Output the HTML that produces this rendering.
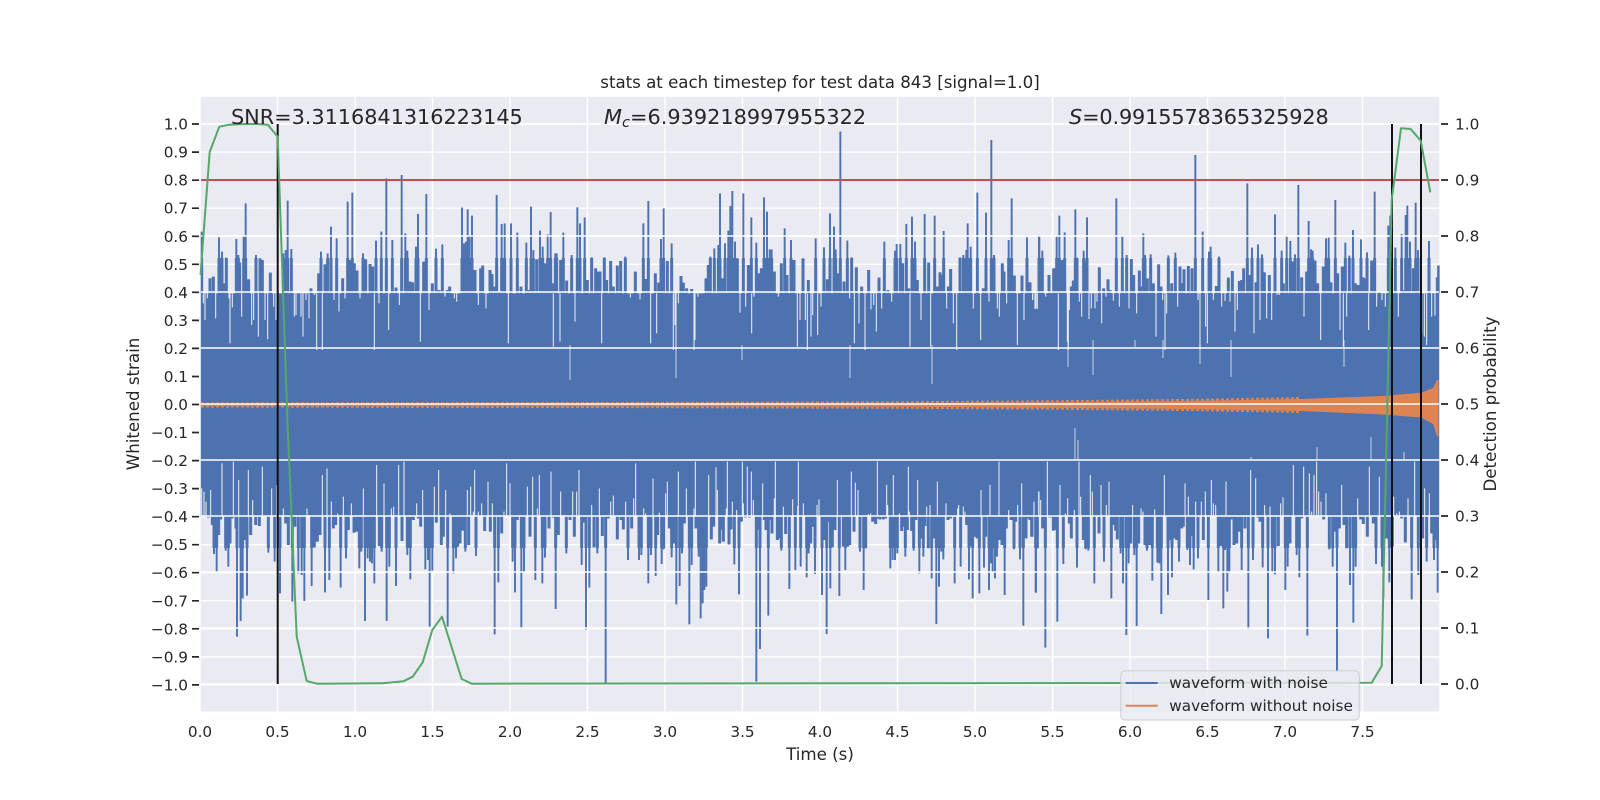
<!DOCTYPE html>
<html><head><meta charset="utf-8"><title>stats at each timestep</title>
<style>
html,body{margin:0;padding:0;background:#fff;width:1600px;height:800px;overflow:hidden}
svg{display:block}
text{font-family:"DejaVu Sans","Liberation Sans",sans-serif;fill:#262626}
.t{font-size:15.28px}
.b{font-size:20.83px}
.l{font-size:16.67px}
.s{fill:none;stroke:#4c72b0}
.n{fill:none;stroke:#eaeaf2;stroke-width:3.2}
</style></head><body>
<svg width="1600" height="800" viewBox="0 0 1600 800" xmlns="http://www.w3.org/2000/svg">
<defs>
<clipPath id="ct"><rect x="201" y="258" width="1238" height="36"/></clipPath>
<clipPath id="cb"><rect x="201" y="516" width="1238" height="32"/></clipPath>
</defs>
<rect x="200.8" y="96.8" width="1238.4" height="614.6" fill="#eaeaf2"/>
<path fill="none" stroke="#fff" stroke-width="1.4" d="M201 124H1439M201 152.1H1439M201 180.2H1439M201 208.2H1439M201 236.3H1439M201 264.3H1439M201 292.3H1439M201 320.4H1439M201 348.4H1439M201 376.5H1439M201 404.5H1439M201 432.5H1439M201 460.6H1439M201 488.6H1439M201 516.7H1439M201 544.7H1439M201 572.7H1439M201 600.8H1439M201 628.8H1439M201 656.9H1439M201 684.9H1439M277.5 97V711M355 97V711M432.5 97V711M510 97V711M587.5 97V711M665 97V711M742.5 97V711M820 97V711M897.5 97V711M975 97V711M1052.5 97V711M1130 97V711M1207.5 97V711M1285 97V711M1362.5 97V711"/>
<rect x="200.8" y="293.3" width="1238.4" height="223.4" fill="#4c72b0"/>
<g transform="translate(200 120) scale(.33333)" stroke-width="5.8">
<path id="a" class="s" d="M5 335V520M30 475V520M40 470V520M57 352V520M66 395V520M72 490V520M79 413V520M109 357V520M115 405V520M119 428V520M131 347V520M137 250V520M146 478V520M168 405V520M180 415V520M187 420V520M211 458V520M250 400V520M257 390V520M263 242V520M274 387V520M333 505V520M356 460V520M363 395V520M375 433V520M383 400V520M393 320V520M410 355V520M428 475V520M443 245V520M449 420V520M457 218V520M463 430V520M471 452V520M489 400V520M497 418V520M510 432V520M518 440V520M528 362V520M544 335V520M559 175V520M577 360V520M588 503V520M605 165V520M616 340V520M622 392V520M630 485V520M638 487V520M648 380V520M654 282V520M671 425V520M679 222V520M697 490V520M708 386V520M717 510V520M727 373V520M742 510V520M749 500V520M786 263V520M792 370V520M798 365V520M803 268V520M809 350V520M816 287V520M825 450V520M842 445V520M848 437V520M870 450V520M876 462V520M884 500V520M890 225V520M898 515V520M905 312V520M914 310V520M933 310V520M952 338V520M963 500V520M979 368V520M985 510V520M993 260V520M1000 390V520M1010 418V520M1020 332V520M1028 380V520M1034 430V520M1043 343V520M1052 276V520M1058 490V520M1066 400V520M1070 400V520M1082 420V520M1090 338V520M1100 482V520M1115 405V520M1132 262V520M1140 310V520M1154 292V520M1162 480V520M1175 412V520M1187 445V520M1192 455V520M1200 455V520M1213 412V520M1220 480V520M1232 423V520M1240 500V520M1252 437V520"/>
<path class="n" d="M10 520V550M15 520V600M22 520V535M47 520V595M87 520V535M90 520V670M97 520V562M125 520V590M155 520V615M161 520V600M175 520V650M195 520V600M203 520V658M221 520V560M228 520V600M283 520V590M288 520V585M303 520V590M309 520V650M318 520V540M327 520V595M343 520V525M350 520V690M367 520V690M402 520V540M417 520V575M435 520V535M480 520V535M523 520V690M537 520V550M566 520V630M598 520V555M661 520V665M687 520V570M735 520V530M763 520V535M770 520V545M835 520V555M858 520V565M925 520V670M1060 520V680M1080 520V665M1125 520V605M1205 520V670"/>
</g>
<g transform="translate(620 120) scale(.33333)" stroke-width="5.8">
<path id="b" class="s" d="M2 423V520M16 410V520M46 455V520M70 310V520M79 477V520M85 243V520M106 460V520M116 488V520M123 357V520M131 265V520M142 423V520M155 370V520M183 468V520M190 488V520M200 505V520M215 507V520M258 475V520M265 435V520M271 410V520M283 385V520M295 375V520M300 220V520M307 475V520M315 370V520M325 332V520M331 258V520M337 213V520M345 365V520M352 415V520M370 220V520M385 435V520M394 292V520M409 368V520M417 460V520M424 445V520M432 232V520M441 275V520M449 388V520M455 388V520M463 455V520M484 430V520M494 325V520M501 465V520M513 360V520M522 420V520M549 415V520M565 480V520M587 355V520M612 382V520M622 478V520M630 280V520M642 320V520M647 388V520M654 460V520M661 35V520M672 485V520M682 362V520M695 412V520M709 442V520M725 500V520M746 450V520M777 473V520M793 365V520M804 510V520M825 392V520M830 372V520M841 372V520M848 430V520M859 312V520M866 505V520M876 290V520M885 365V520M892 480V520M914 282V520M926 428V520M944 287V520M952 500V520M960 457V520M968 465V520M971 333V520M985 500V520M992 447V520M1020 412V520M1030 405V520M1039 390V520M1043 310V520M1052 380V520M1072 218V520M1090 505V520M1098 278V520M1114 60V520M1122 405V520M1147 430V520M1152 455V520M1166 360V520M1175 235V520M1183 467V520M1206 467V520M1221 352V520M1230 487V520M1257 347V520"/>
<path class="n" d="M31 520V533M60 520V538M92 520V670M110 520V640M165 520V615M160 520V690M168 520V690M175 520V550M222 520V690M225 520V660M234 520V530M360 520V578M377 520V560M395 520V640M402 520V530M475 520V530M532 520V680M540 520V600M556 520V600M562 520V690M573 520V650M578 520V585M593 520V645M603 520V560M689 520V535M703 520V670M717 520V610M735 520V690M753 520V568M761 520V555M769 520V635M785 520V565M815 520V545M870 520V680M903 520V600M932 520V680M980 520V565M1000 520V610M1010 520V690M1060 520V565M1082 520V660M1107 520V545M1132 520V565M1138 520V590M1160 520V550M1192 520V675M1212 520V600M1238 520V540M1248 520V565"/>
</g>
<g transform="translate(1030 120) scale(.33333)" stroke-width="5.8">
<path id="c" class="s" d="M3 520V522M28 346V520M37 392V520M57 465V520M63 520V522M71 445V520M80 350V520M88 287V520M96 420V520M104 337V520M124 500V520M130 482V520M136 268V520M141 413V520M161 392V520M166 425V520M171 292V520M208 442V520M221 505V520M234 478V520M240 510V520M259 235V520M277 347V520M290 405V520M304 417V520M311 465V520M328 452V520M335 500V520M340 340V520M345 405V520M352 475V520M362 403V520M370 490V520M386 433V520M393 500V520M415 406V520M425 490V520M436 398V520M450 440V520M456 490V520M462 448V520M475 438V520M486 445V520M496 105V520M518 335V520M537 395V520M542 380V520M559 498V520M567 410V520M595 473V520M607 453V520M628 483V520M635 480V520M641 445V520M652 190V520M660 465V520M666 383V520M678 487V520M684 373V520M696 403V520M703 457V520M718 465V520M735 283V520M755 392V520M760 490V520M770 347V520M781 363V520M788 425V520M795 403V520M805 195V520M815 472V520M830 455V520M836 303V520M843 388V520M848 392V520M855 422V520M863 490V520M880 440V520M888 355V520M896 353V520M903 487V520M916 240V520M923 460V520M937 440V520M946 368V520M958 407V520M969 330V520M976 490V520M984 495V520M993 358V520M999 472V520M1004 475V520M1011 397V520M1025 422V520M1034 215V520M1048 515V520M1075 317V520M1081 287V520M1096 383V520M1115 342V520M1120 510V520M1127 285V520M1132 257V520M1140 365V520M1150 445V520M1157 248V520M1164 390V520M1197 363V520M1222 472V520M1226 437V520"/>
<path class="n" d="M8 520V540M15 520V567M22 520V567M47 520V530M85 520V690M112 520V665M115 520V690M118 520V570M148 520V545M155 520V590M177 520V597M184 520V565M195 520V565M201 520V545M215 520V610M228 520V530M250 520V542M268 520V560M297 520V565M320 520V580M378 520V650M398 520V540M405 520V690M410 520V580M443 520V560M504 520V540M510 520V690M527 520V620M532 520V670M550 520V540M575 520V560M585 520V543M600 520V545M615 520V635M622 520V570M672 520V640M690 520V600M710 520V595M725 520V600M741 520V525M748 520V525M822 520V590M872 520V660M930 520V630M940 520V680M950 520V590M1016 520V630M1040 520V560M1056 520V540M1066 520V560M1105 520V590M1175 520V640M1183 520V650M1190 520V675M1205 520V590M1215 520V587"/>
</g>
<g transform="translate(200 460) scale(.33333)" stroke-width="5.8">
<path id="d" class="s" d="M25 170V172M37 170V195M42 170V282M50 170V335M56 170V225M62 170V178M77 170V272M85 170V320M90 170V250M96 170V175M108 170V205M111 170V530M122 170V483M128 170V415M133 170V240M141 170V407M152 170V225M167 170V195M178 170V198M205 170V278M224 170V305M240 170V400M257 170V190M265 170V255M277 170V425M285 170V200M295 170V340M305 170V345M313 170V423M335 170V378M343 170V262M352 170V245M360 170V225M375 170V397M388 170V360M400 170V205M407 170V195M422 170V383M438 170V295M445 170V210M462 170V218M469 170V215M478 170V325M484 170V275M495 170V483M503 170V295M510 170V305M516 170V310M523 170V370M538 170V258M545 170V275M560 170V483M568 170V320M588 170V378M606 170V243M622 170V285M631 170V358M640 170V180M655 170V175M662 170V200M676 170V328M684 170V300M689 170V500M697 170V332M709 170V188M724 170V255M730 170V230M743 170V500M760 170V340M768 170V295M773 170V260M780 170V250M787 170V212M796 170V275M806 170V255M828 170V288M854 170V213M871 170V215M884 170V523M895 170V367M905 170V220M938 170V305M945 170V397M952 170V180M964 170V505M972 170V335M990 170V230M1006 170V360M1027 170V370M1035 170V293M1047 170V205M1059 170V172M1067 170V447M1075 170V225M1099 170V280M1110 170V180M1123 170V230M1145 170V315M1150 170V188M1158 170V508M1168 170V383M1182 170V262M1192 170V280M1207 170V228M1217 170V670M1225 170V175M1252 170V238"/>
<path class="n" d="M5 85V170M12 95V170M18 125V170M32 90V170M66 10V170M100 5V170M116 60V170M145 30V170M158 120V170M187 20V170M215 85V170M230 75V170M250 145V170M321 145V170M327 165V170M367 45V170M381 25V170M394 125V170M413 160V170M430 110V170M454 130V170M490 85V170M530 15V170M552 70V170M574 145V170M581 140V170M596 15V170M612 5V170M650 130V170M668 90V170M703 80V170M716 30V170M737 90V170M750 160V170M802 90V170M812 80V170M820 155V170M824 30V170M835 155V170M845 130V170M864 65V170M877 130V170M912 155V170M920 10V170M930 70V170M982 80V170M998 50V170M1012 145V170M1018 45V170M1053 35V170M1082 95V170M1091 165V170M1118 95V170M1130 95V170M1137 30V170M1175 135V170M1198 85V170M1232 125V170M1240 107V170"/>
</g>
<g transform="translate(620 460) scale(.33333)" stroke-width="5.8">
<path id="e" class="s" d="M3 170V180M10 170V208M24 170V300M35 170V205M57 170V300M64 170V285M85 170V370M93 170V285M107 170V348M113 170V225M125 170V312M131 170V268M148 170V205M155 170V292M161 170V250M169 170V433M179 170V378M186 170V280M193 170V190M208 170V493M215 170V315M228 170V205M236 170V290M242 170V475M248 170V430M253 170V390M259 170V380M274 170V238M281 170V200M299 170V250M305 170V208M310 170V245M327 170V253M333 170V208M343 170V313M357 170V403M364 170V185M376 170V172M388 170V172M409 170V665M415 170V208M420 170V567M433 170V180M438 170V210M445 170V467M452 170V180M456 170V220M472 170V240M477 170V235M484 170V272M497 170V222M508 170V387M526 170V330M542 170V320M560 170V352M566 170V280M572 170V250M578 170V200M585 170V342M606 170V405M614 170V240M620 170V522M626 170V185M631 170V385M637 170V262M645 170V210M658 170V408M670 170V260M676 170V330M683 170V260M689 170V255M702 170V215M720 170V275M731 170V390M737 170V265M758 170V185M767 170V192M773 170V175M780 170V178M790 170V178M797 170V175M811 170V325M818 170V300M825 170V300M832 170V280M845 170V213M850 170V200M856 170V290M862 170V210M875 170V213M881 170V272M888 170V180M898 170V340M905 170V235M910 170V290M915 170V198M925 170V265M935 170V355M942 170V235M949 170V492M957 170V380M964 170V275M970 170V298M984 170V180M992 170V175M1004 170V370M1022 170V320M1040 170V195M1047 170V358M1052 170V258M1058 170V415M1065 170V230M1071 170V235M1078 170V400M1092 170V323M1097 170V230M1107 170V390M1113 170V310M1118 170V335M1125 170V355M1131 170V290M1138 170V240M1146 170V255M1154 170V405M1159 170V205M1173 170V180M1182 170V268M1187 170V185M1200 170V298M1210 170V497M1218 170V235M1224 170V175M1230 170V180M1236 170V230M1248 170V398"/>
<path class="n" d="M17 125V170M41 115V170M47 10V170M71 145V170M77 160V170M99 55V170M118 158V170M137 100V170M142 65V170M175 35V170M199 85V170M222 145V170M226 5V170M266 45V170M288 22V170M292 90V170M319 145V170M322 5V170M337 125V170M350 150V170M367 5V170M370 130V170M382 20V170M394 35V170M400 120V170M428 70V170M463 115V170M466 5V170M490 140V170M518 118V170M533 138V170M535 5V170M550 130V170M591 135V170M597 118V170M652 60V170M664 165V170M694 35V170M706 68V170M714 90V170M745 162V170M752 160V170M772 5V170M800 75V170M803 135V170M820 45V170M838 160V170M865 20V170M868 155V170M893 60V170M920 140V170M930 135V170M952 65V170M978 130V170M1013 145V170M1016 135V170M1030 140V170M1035 155V170M1083 90V170M1102 165V170M1110 75V170M1137 5V170M1166 150V170M1193 135V170M1205 70V170M1242 125V170M1256 95V170"/>
</g>
<g transform="translate(1030 460) scale(.33333)" stroke-width="5.8">
<path id="f" class="s" d="M5 170V230M17 170V398M22 170V265M38 170V205M46 170V563M60 170V172M70 170V212M76 170V210M82 170V485M100 170V312M118 170V190M124 170V235M141 170V323M160 170V240M167 170V268M175 170V272M193 170V370M207 170V220M222 170V305M244 170V415M250 170V195M257 170V212M262 170V238M272 170V280M279 170V370M289 170V525M296 170V310M302 170V250M313 170V285M320 170V498M326 170V250M345 170V255M351 170V272M358 170V255M367 170V362M382 170V308M388 170V310M394 170V462M414 170V405M420 170V240M426 170V352M433 170V235M440 170V240M447 170V305M455 170V205M460 170V200M472 170V270M480 170V315M486 170V228M491 170V328M504 170V295M520 170V240M535 170V420M565 170V335M572 170V258M580 170V445M585 170V270M592 170V395M598 170V335M604 170V178M612 170V255M620 170V250M628 170V215M635 170V330M645 170V205M655 170V507M669 170V300M684 170V172M690 170V185M698 170V322M714 170V535M727 170V335M735 170V343M745 170V258M766 170V390M773 170V320M780 170V250M800 170V285M808 170V352M815 170V175M832 170V527M881 170V178M898 170V268M908 170V320M913 170V215M921 170V635M928 170V205M942 170V195M950 170V265M960 170V375M970 170V488M977 170V320M992 170V178M1000 170V192M1012 170V230M1030 170V190M1038 170V312M1056 170V320M1060 170V415M1070 170V235M1078 170V367M1087 170V260M1115 170V175M1126 170V247M1145 170V418M1165 170V345M1178 170V235M1190 170V305M1205 170V220M1212 170V300M1218 170V240M1223 170V398"/>
<path class="n" d="M27 95V170M32 120V170M52 5V170M90 75V170M106 160V170M113 115V170M133 150V170M147 5V170M152 110V170M181 45V170M187 95V170M213 75V170M229 135V170M237 65V170M308 135V170M333 145V170M339 155V170M374 148V170M403 45V170M465 70V170M475 110V170M497 125V170M514 125V170M526 95V170M544 60V170M550 130V170M557 135V170M588 65V170M662 30V170M677 55V170M704 135V170M720 140V170M752 130V170M759 112V170M790 15V170M821 20V170M838 40V170M845 155V170M852 45V170M860 5V170M866 95V170M873 125V170M888 100V170M935 75V170M983 115V170M1018 20V170M1048 50V170M1091 110V170M1100 160V170M1108 155V170M1134 115V170M1154 5V170M1184 85V170M1198 100V170"/>
</g>
<g clip-path="url(#ct)">
<g transform="translate(200 120) scale(.33333)" stroke-width="9"><use href="#a"/></g>
<g transform="translate(620 120) scale(.33333)" stroke-width="9"><use href="#b"/></g>
<g transform="translate(1030 120) scale(.33333)" stroke-width="9"><use href="#c"/></g>
</g>
<g clip-path="url(#cb)">
<g transform="translate(200 460) scale(.33333)" stroke-width="9"><use href="#d"/></g>
<g transform="translate(620 460) scale(.33333)" stroke-width="9"><use href="#e"/></g>
<g transform="translate(1030 460) scale(.33333)" stroke-width="9"><use href="#f"/></g>
</g>
<path fill="none" stroke="#eaeaf2" stroke-width="1" opacity=".8" d="M1068 340V367M1093 340V375M1135 340V347M1163 340V358M1200 340V364M1231 340V377M1344 340V367M1075 428V460M1078 440V460M1251 457V460M1317 447V460M1371 437V460M1404 452V460M850 345V378M742 345V360M932 345V384M570 345V380M676 345V378"/>
<path fill="#dd8452" d="M201 404L600 403.8L900 403.2L1050 402.2L1200 400.8L1300 399L1383 396L1421 392.7L1433 388L1437 380L1438.5 380L1438.5 437L1437 436L1433 424L1421 417.5L1383 414.5L1300 411L1200 409.2L1050 407.8L900 406.8L600 406.2L201 406Z"/>
<path fill="none" stroke="#dd8452" stroke-width="2" stroke-dasharray="3 2" d="M201 403.5L600 403L900 402.2L1050 401.3L1200 399.8L1300 398M201 406.5L600 407L900 407.8L1050 408.7L1200 410.2L1300 412"/>
<path fill="none" stroke="#fff" stroke-width="1.4" d="M201 124H1439M201 180H1439M201 236H1439M201 292H1439M201 348H1439M201 404H1439M201 460H1439M201 516H1439M201 572H1439M201 628H1439M201 684H1439"/>
<path stroke="#c44e52" stroke-width="2" fill="none" d="M201 180H1439"/>
<path stroke="#111" stroke-width="2" fill="none" d="M277.7 124V684M1392 124V684M1421 124V684"/>
<path fill="none" stroke="#55a868" stroke-width="2" stroke-linejoin="round" d="M200.5 275L209.7 152L219.3 126.7L229 124.7L238 124.2L248 124L258 124L267.7 124.7L277.7 136.7L287.4 420L296.7 636.7L306.7 681L316.7 683.7L383 683.3L403.3 681.3L412.7 676.7L422.7 662.3L432.3 630L442 616.7L461.7 679L471.7 683.7L1371.7 682.7L1381.7 666L1391.7 200L1401 128.3L1410.7 129L1420.7 140.7L1430.3 192.3"/>
<path stroke="#262626" stroke-width="1.7" fill="none" d="M192 124H199M192 152.1H199M192 180.2H199M192 208.2H199M192 236.3H199M192 264.3H199M192 292.3H199M192 320.4H199M192 348.4H199M192 376.5H199M192 404.5H199M192 432.5H199M192 460.6H199M192 488.6H199M192 516.7H199M192 544.7H199M192 572.7H199M192 600.8H199M192 628.8H199M192 656.9H199M192 684.9H199M1441 124H1448M1441 180H1448M1441 236H1448M1441 292H1448M1441 348H1448M1441 404H1448M1441 460H1448M1441 516H1448M1441 572H1448M1441 628H1448M1441 684H1448"/>
<rect x="1120.8" y="670.8" width="238.5" height="49.2" rx="4" fill="#eaeaf2" fill-opacity=".8" stroke="#ccc" stroke-opacity=".8" stroke-width="1.2"/>
<path stroke="#4c72b0" stroke-width="2" d="M1125.7 683H1157.7"/>
<path stroke="#dd8452" stroke-width="2" d="M1125.7 705.7H1157.7"/>
<text class="t" x="1169.3" y="688">waveform with noise</text>
<text class="t" x="1169.3" y="711">waveform without noise</text>
<text class="l" x="820" y="88" text-anchor="middle" letter-spacing="-.02">stats at each timestep for test data 843 [signal=1.0]</text>
<text class="b" x="231" y="124" letter-spacing="-.04">SNR=3.3116841316223145</text>
<text class="b" x="604" y="124"><tspan font-style="italic">M</tspan><tspan font-style="italic" font-size="14.6" dy="3">c</tspan><tspan dy="-3">=6.939218997955322</tspan></text>
<text class="b" x="1069" y="124" letter-spacing="-.15"><tspan font-style="italic">S</tspan>=0.9915578365325928</text>
<g text-anchor="end">
<text class="t" x="188" y="129.5">1.0</text><text class="t" x="188" y="157.6">0.9</text><text class="t" x="188" y="185.7">0.8</text><text class="t" x="188" y="213.7">0.7</text><text class="t" x="188" y="241.8">0.6</text><text class="t" x="188" y="269.8">0.5</text><text class="t" x="188" y="297.8">0.4</text><text class="t" x="188" y="325.9">0.3</text><text class="t" x="188" y="353.9">0.2</text><text class="t" x="188" y="382">0.1</text><text class="t" x="188" y="410">0.0</text><text class="t" x="188" y="438">−0.1</text><text class="t" x="188" y="466.1">−0.2</text><text class="t" x="188" y="494.1">−0.3</text><text class="t" x="188" y="522.2">−0.4</text><text class="t" x="188" y="550.2">−0.5</text><text class="t" x="188" y="578.2">−0.6</text><text class="t" x="188" y="606.3">−0.7</text><text class="t" x="188" y="634.3">−0.8</text><text class="t" x="188" y="662.4">−0.9</text><text class="t" x="188" y="690.4">−1.0</text>
</g>
<g>
<text class="t" x="1455" y="129.5">1.0</text><text class="t" x="1455" y="185.5">0.9</text><text class="t" x="1455" y="241.5">0.8</text><text class="t" x="1455" y="297.5">0.7</text><text class="t" x="1455" y="353.5">0.6</text><text class="t" x="1455" y="409.5">0.5</text><text class="t" x="1455" y="465.5">0.4</text><text class="t" x="1455" y="521.5">0.3</text><text class="t" x="1455" y="577.5">0.2</text><text class="t" x="1455" y="633.5">0.1</text><text class="t" x="1455" y="689.5">0.0</text>
</g>
<g text-anchor="middle">
<text class="t" x="200" y="737">0.0</text><text class="t" x="277.5" y="737">0.5</text><text class="t" x="355" y="737">1.0</text><text class="t" x="432.5" y="737">1.5</text><text class="t" x="510" y="737">2.0</text><text class="t" x="587.5" y="737">2.5</text><text class="t" x="665" y="737">3.0</text><text class="t" x="742.5" y="737">3.5</text><text class="t" x="820" y="737">4.0</text><text class="t" x="897.5" y="737">4.5</text><text class="t" x="975" y="737">5.0</text><text class="t" x="1052.5" y="737">5.5</text><text class="t" x="1130" y="737">6.0</text><text class="t" x="1207.5" y="737">6.5</text><text class="t" x="1285" y="737">7.0</text><text class="t" x="1362.5" y="737">7.5</text>
<text class="l" x="820" y="760">Time (s)</text>
<text class="l" transform="translate(139 404) rotate(-90)">Whitened strain</text>
<text class="l" transform="translate(1496 404) rotate(-90)">Detection probability</text>
</g>
</svg>
</body></html>
